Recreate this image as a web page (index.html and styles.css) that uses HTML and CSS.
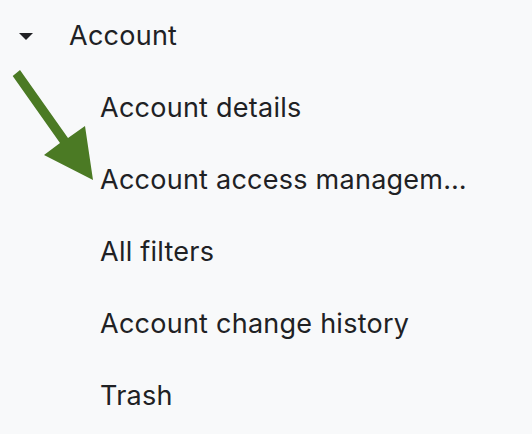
FILE: index.html
```html
<!DOCTYPE html>
<html>
<head>
<meta charset="utf-8">
<link rel="stylesheet" href="styles.css">
</head>
<body>
<nav class="tree">
  <div class="row parent">
    <svg class="caret" width="14" height="7" viewBox="0 0 14 7"><polygon points="0,0 14,0 7,7" fill="#202124"/></svg>
    <span class="label">Account</span>
  </div>
  <ul class="children">
    <li class="row child"><span class="label">Account details</span></li>
    <li class="row child"><span class="label">Account access management</span></li>
    <li class="row child"><span class="label">All filters</span></li>
    <li class="row child"><span class="label">Account change history</span></li>
    <li class="row child"><span class="label">Trash</span></li>
  </ul>
  <svg class="pointer" width="100" height="190" viewBox="0 0 100 190">
    <polygon points="20,70 68,138 85,126 93,180 44,155 60,143 12.7,76" fill="#4b7a24"/>
  </svg>
</nav>
</body>
</html>
```
FILE: styles.css
```css
html, body {
  margin: 0;
  padding: 0;
  background: #f8f9fa;
}
body {
  font-family: Inter, Roboto, sans-serif;
  color: #202124;
  width: 532px;
  height: 434px;
  overflow: hidden;
}
.tree {
  position: relative;
}
.row {
  display: flex;
  align-items: center;
  height: 72px;
  font-size: 27px;
  line-height: 72px;
  letter-spacing: 0.25px;
}
.parent {
  padding-left: 19px;
}
.caret {
  flex: none;
  margin-right: 36px;
}
.children {
  list-style: none;
  margin: 0;
  padding: 0;
}
.child {
  padding-left: 100px;
}
.child .label {
  display: block;
  max-width: 372px;
  white-space: nowrap;
  overflow: hidden;
  text-overflow: ellipsis;
}
.pointer {
  position: absolute;
  left: 0;
  top: 0;
}
```
